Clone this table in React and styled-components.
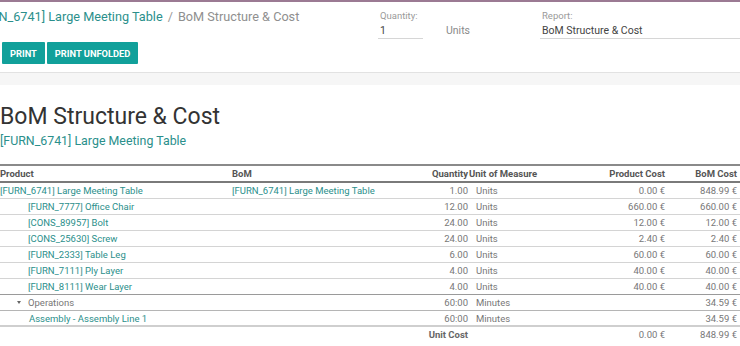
import React from "react";
import styled, { createGlobalStyle } from "styled-components";

const lines = [
  { product: "[FURN_6741] Large Meeting Table", bom: "[FURN_6741] Large Meeting Table", qty: "1.00", uom: "Units", cost: "0.00 €", bomCost: "848.99 €" },
  { product: "[FURN_7777] Office Chair", qty: "12.00", uom: "Units", cost: "660.00 €", bomCost: "660.00 €", child: true },
  { product: "[CONS_89957] Bolt", qty: "24.00", uom: "Units", cost: "12.00 €", bomCost: "12.00 €", child: true },
  { product: "[CONS_25630] Screw", qty: "24.00", uom: "Units", cost: "2.40 €", bomCost: "2.40 €", child: true },
  { product: "[FURN_2333] Table Leg", qty: "6.00", uom: "Units", cost: "60.00 €", bomCost: "60.00 €", child: true },
  { product: "[FURN_7111] Ply Layer", qty: "4.00", uom: "Units", cost: "40.00 €", bomCost: "40.00 €", child: true },
  { product: "[FURN_8111] Wear Layer", qty: "4.00", uom: "Units", cost: "40.00 €", bomCost: "40.00 €", child: true, line: "#9a9a9a" },
];

const App = () => {
  return (
    <>
      <GlobalStyle />
      <TopBar />
      <ControlPanel>
        <Left>
          <Breadcrumb>
            <Crumb>[FURN_6741] Large Meeting Table</Crumb>
            <Sep>/</Sep>
            <Current>BoM Structure &amp; Cost</Current>
          </Breadcrumb>
          <Buttons>
            <Button>Print</Button>
            <Button>Print Unfolded</Button>
          </Buttons>
        </Left>
        <Fields>
          <Field>
            <Label>Quantity:</Label>
            <Value>1</Value>
          </Field>
          <UnitText>Units</UnitText>
          <Field>
            <Label>Report:</Label>
            <Value>BoM Structure &amp; Cost</Value>
          </Field>
        </Fields>
      </ControlPanel>
      <Band />
      <Content>
        <Title>BoM Structure &amp; Cost</Title>
        <Subtitle>[FURN_6741] Large Meeting Table</Subtitle>
        <Table>
          <HeadRow>
            <Th>Product</Th>
            <Th>BoM</Th>
            <Th $right>Quantity</Th>
            <Th $pad={1}>Unit of Measure</Th>
            <Th $right>Product Cost</Th>
            <Th $right>BoM Cost</Th>
          </HeadRow>
          {lines.map((l) => (
            <Row key={l.product} $line={l.line}>
              <Link $indent={l.child ? 28 : 0}>{l.product}</Link>
              <Link>{l.bom || ""}</Link>
              <Num $right>{l.qty}</Num>
              <Num $pad={8}>{l.uom}</Num>
              <Num $right>{l.cost}</Num>
              <Num $right>{l.bomCost}</Num>
            </Row>
          ))}
          <Row $line="#b5b5b5">
            <OpCell>
              <Caret />
              Operations
            </OpCell>
            <Num />
            <Num $right>60:00</Num>
            <Num $pad={8}>Minutes</Num>
            <Num />
            <Num $right>34.59 €</Num>
          </Row>
          <Row $line="#cfcfcf" $thick>
            <Link $indent={29}>Assembly - Assembly Line 1</Link>
            <Num />
            <Num $right>60:00</Num>
            <Num $pad={8}>Minutes</Num>
            <Num />
            <Num $right>34.59 €</Num>
          </Row>
          <Row $line="transparent">
            <Num />
            <Num />
            <TotalLabel>Unit Cost</TotalLabel>
            <Num />
            <Num $right>0.00 €</Num>
            <Num $right>848.99 €</Num>
          </Row>
        </Table>
      </Content>
    </>
  );
};

export default App;

const GlobalStyle = createGlobalStyle`
  body {
    margin: 0;
    background: #fff;
    font-family: Roboto, "Liberation Sans", sans-serif;
    overflow: hidden;
  }
`;

const TopBar = styled.div`
  height: 2px;
  background: #9b7a93;
`;

const ControlPanel = styled.div`
  display: flex;
  padding: 5px 0 8px;
  border-bottom: 1px solid #e2e2e2;
  background: #fff;
`;

const Left = styled.div`
  width: 378px;
  display: flex;
  flex-direction: column;
`;

const Breadcrumb = styled.div`
  margin-left: -28px;
  font-size: 12.7px;
  line-height: 20px;
  white-space: nowrap;
`;

const Crumb = styled.span`
  color: #2b8f8b;
`;

const Sep = styled.span`
  color: #999;
  margin: 0 5px;
`;

const Current = styled.span`
  color: #8f8f8f;
`;

const Buttons = styled.div`
  display: flex;
  gap: 2px;
  margin-top: 15px;
  padding-left: 2px;
`;

const Button = styled.button`
  height: 22px;
  padding: 0 8px;
  border: none;
  border-radius: 1px;
  background: #11a09a;
  color: #fff;
  font-family: Roboto, sans-serif;
  font-weight: bold;
  font-size: 9.3px;
  text-transform: uppercase;
`;

const Fields = styled.div`
  flex: 1;
  display: grid;
  grid-template-columns: 45px 117px 1fr;
  padding-top: 2px;
`;

const Field = styled.div`
  display: flex;
  flex-direction: column;
`;

const Label = styled.div`
  font-size: 9.5px;
  line-height: 13px;
  color: #9a9a9a;
  padding-left: 2px;
`;

const Value = styled.div`
  font-size: 10.5px;
  line-height: 14px;
  color: #444;
  padding: 2px 0 0 2px;
  border-bottom: 1px solid #d6d6d6;
`;

const UnitText = styled.div`
  padding: 15px 0 0 23px;
  font-size: 10.5px;
  line-height: 14px;
  color: #8a8a8a;
`;

const Band = styled.div`
  height: 12px;
  background: #f6f6f6;
`;

const Content = styled.div`
  padding-top: 18px;
`;

const Title = styled.div`
  font-size: 23px;
  line-height: 28px;
  color: #333;
`;

const Subtitle = styled.div`
  margin-top: 1px;
  font-size: 12.4px;
  line-height: 18px;
  color: #2b8f8b;
`;

const Table = styled.div`
  margin-top: 14px;
  border-top: 2px solid #8a8a8a;
  font-size: 9.5px;
`;

const HeadRow = styled.div`
  display: grid;
  grid-template-columns: 232px 188px 48px 92px 105px 75px;
  height: 15px;
  align-items: center;
  border-bottom: 2px solid #7a7a7a;
`;

const Th = styled.div`
  font-weight: bold;
  color: #555;
  white-space: nowrap;
  text-align: ${(p) => (p.$right ? "right" : "left")};
  padding-left: ${(p) => p.$pad || 0}px;
  &:last-child {
    padding-right: 3px;
  }
`;

const Row = styled.div`
  display: grid;
  grid-template-columns: 232px 188px 48px 92px 105px 75px;
  height: ${(p) => (p.$thick ? 14 : 15)}px;
  align-items: center;
  border-bottom: ${(p) => (p.$thick ? 2 : 1)}px solid ${(p) => p.$line || "#d4d4d4"};
`;

const Link = styled.div`
  color: #2b8f8b;
  white-space: nowrap;
  padding-left: ${(p) => p.$indent || 0}px;
`;

const Num = styled.div`
  color: #777;
  white-space: nowrap;
  text-align: ${(p) => (p.$right ? "right" : "left")};
  padding-left: ${(p) => p.$pad || 0}px;
  &:last-child {
    padding-right: 3px;
  }
`;

const OpCell = styled.div`
  display: flex;
  align-items: center;
  padding-left: 17px;
  color: #777;
`;

const Caret = styled.span`
  width: 0;
  height: 0;
  margin-right: 7px;
  border-left: 2.5px solid transparent;
  border-right: 2.5px solid transparent;
  border-top: 3px solid #666;
`;

const TotalLabel = styled.div`
  font-weight: bold;
  color: #666;
  text-align: right;
  white-space: nowrap;
`;
